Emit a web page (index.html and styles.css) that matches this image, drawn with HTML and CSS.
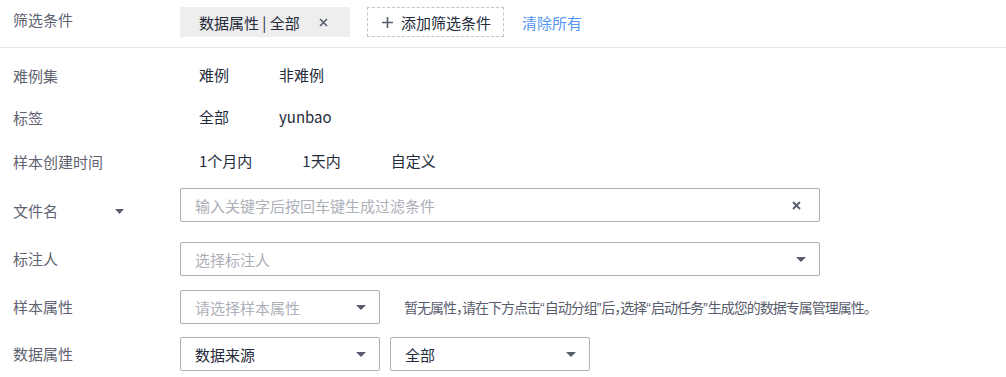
FILE: index.html
```html
<!DOCTYPE html>
<html lang="zh-CN">
<head>
<meta charset="utf-8">
<link rel="stylesheet" href="styles.css">
</head>
<body>
<div class="filter-bar">
  <span class="label">筛选条件</span>
  <div class="chips">
    <span class="chip"><span class="chip-text">数据属性 | 全部</span><svg class="chip-x" width="9" height="9" viewBox="0 0 9 9"><path d="M1 1L8 8M8 1L1 8" stroke="#575d6c" stroke-width="1.6"/></svg></span>
    <span class="add-btn"><svg width="11" height="11" viewBox="0 0 11 11"><path d="M5.5 0V11M0 5.5H11" stroke="#575d6c" stroke-width="1.6"/></svg><span>添加筛选条件</span></span>
    <span class="clear">清除所有</span>
  </div>
</div>

<div class="rows">
  <div class="row r1">
    <span class="label">难例集</span>
    <div class="options"><span>难例</span><span>非难例</span></div>
  </div>
  <div class="row r2">
    <span class="label">标签</span>
    <div class="options"><span>全部</span><span>yunbao</span></div>
  </div>
  <div class="row r3">
    <span class="label">样本创建时间</span>
    <div class="options"><span>1个月内</span><span>1天内</span><span>自定义</span></div>
  </div>
  <div class="row field r4">
    <span class="label label-select"><span>文件名</span><svg class="tri" width="9" height="5" viewBox="0 0 9 5"><path d="M0 0H9L4.5 5Z" fill="#575d6c"/></svg></span>
    <div class="input wide">
      <span class="placeholder">输入关键字后按回车键生成过滤条件</span>
      <svg class="clear-x" width="9" height="9" viewBox="0 0 9 9"><path d="M1 1L8 8M8 1L1 8" stroke="#575d6c" stroke-width="1.8"/></svg>
    </div>
  </div>
  <div class="row field r5">
    <span class="label">标注人</span>
    <div class="input wide">
      <span class="placeholder">选择标注人</span>
      <svg width="10" height="5" viewBox="0 0 10 5"><path d="M0 0H10L5 5Z" fill="#575d6c"/></svg>
    </div>
  </div>
  <div class="row field r6">
    <span class="label">样本属性</span>
    <div class="input narrow">
      <span class="placeholder">请选择样本属性</span>
      <svg width="10" height="5" viewBox="0 0 10 5"><path d="M0 0H10L5 5Z" fill="#575d6c"/></svg>
    </div>
    <span class="hint">暂无属性，请在下方点击<span class="q">“</span>自动分组<span class="q">”</span>后，选择<span class="q">“</span>启动任务<span class="q">”</span>生成您的数据专属管理属性。</span>
  </div>
  <div class="row field r7">
    <span class="label">数据属性</span>
    <div class="input narrow">
      <span class="value">数据来源</span>
      <svg width="10" height="5" viewBox="0 0 10 5"><path d="M0 0H10L5 5Z" fill="#575d6c"/></svg>
    </div>
    <div class="input narrow">
      <span class="value">全部</span>
      <svg width="10" height="5" viewBox="0 0 10 5"><path d="M0 0H10L5 5Z" fill="#575d6c"/></svg>
    </div>
  </div>
</div>
</body>
</html>
```

FILE: styles.css
```css
* { box-sizing: border-box; }
html, body { margin: 0; padding: 0; background: #fff; }
body {
  font-family: "Noto Sans CJK SC", "Liberation Sans", sans-serif;
  font-size: 15px;
  color: #252b3a;
  width: 1006px;
  height: 377px;
  overflow: hidden;
}
.label {
  width: 180px;
  flex: none;
  padding-left: 13px;
  color: #5f6370;
  line-height: 22px;
}
.filter-bar {
  display: flex;
  align-items: flex-start;
  height: 48px;
  padding-top: 7px;
  border-bottom: 1px solid #e8e8e8;
}
.filter-bar .label { line-height: 26px; }
.chips { display: flex; align-items: center; height: 30px; }
.chip {
  display: flex;
  align-items: center;
  height: 30px;
  width: 170px;
  padding-left: 19px;
  background: #eeeeee;
  color: #252b3a;
}
.chip-x { margin-left: auto; margin-right: 22px; }
.add-btn {
  display: flex;
  align-items: center;
  gap: 8px;
  width: 137px;
  height: 30px;
  margin-left: 17px;
  padding-left: 14px;
  border: 1px dashed #c4c4c4;
  color: #252b3a;
}
.clear { margin-left: 18px; color: #5497f0; }

.rows { margin-top: 7px; }
.row { display: flex; align-items: center; }
.r1, .r2 { height: 42px; }
.r3 { height: 46px; }
.options { display: flex; gap: 50px; padding-left: 19px; padding-bottom: 3px; color: #252b3a; }
.field { height: 34px; }
.r4 { margin-top: 3px; }
.r5 { margin-top: 20px; }
.r6 { margin-top: 14px; }
.r7 { margin-top: 13px; }
.label-select { display: flex; align-items: center; margin-top: 12px; }
.tri { margin-left: 57px; }
.input {
  display: flex;
  align-items: center;
  justify-content: space-between;
  height: 34px;
  padding: 0 13px 0 14px;
  border: 1px solid #adb0b8;
  border-radius: 2px;
}
.wide { width: 640px; }
.narrow { width: 200px; }
.clear-x { margin-right: 5px; }
.r7 .narrow + .narrow { margin-left: 10px; }
.placeholder { color: #adb0b8; }
.value { color: #252b3a; }
.hint {
  margin-left: 24px;
  font-size: 14px;
  letter-spacing: -1px;
  color: #575d6c;
  font-feature-settings: "halt";
}
.hint .q { font-family: "Liberation Sans", sans-serif; letter-spacing: 0; }
```
